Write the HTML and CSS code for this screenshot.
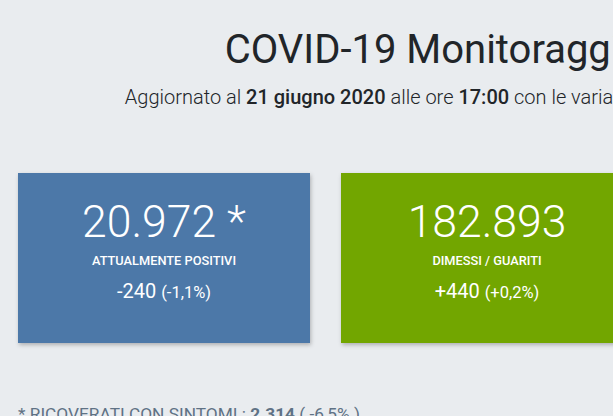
FILE: index.html
```html
<!DOCTYPE html>
<html lang="it">
<head>
<meta charset="utf-8">
<title>COVID-19 Monitoraggio</title>
<link rel="stylesheet" href="styles.css">
</head>
<body>
<div class="page">
  <header class="header">
    <h1 class="title">COVID-19 Monitoraggio Situazione</h1>
    <p class="lead">Aggiornato al <b>21 giugno 2020</b> alle ore <b>17:00</b> con le variazioni rispetto al giorno precedente</p>
  </header>
  <section class="cards">
    <div class="card card-blue">
      <div class="num">20.972 *</div>
      <div class="label">Attualmente positivi</div>
      <div class="delta">-240 <span class="pct">(-1,1%)</span></div>
    </div>
    <div class="card card-green">
      <div class="num">182.893</div>
      <div class="label">Dimessi / Guariti</div>
      <div class="delta">+440 <span class="pct">(+0,2%)</span></div>
    </div>
    <div class="card card-red">
      <div class="num">34.634</div>
      <div class="label">Deceduti</div>
      <div class="delta">+24 <span class="pct">(+0,1%)</span></div>
    </div>
  </section>
  <p class="note">* RICOVERATI CON SINTOMI : <b>2.314</b> ( -6,5% )</p>
</div>
</body>
</html>
```

FILE: styles.css
```css
html, body {
  margin: 0;
  padding: 0;
  overflow: hidden;
}
body {
  background: #e9ecef;
  font-family: Roboto, "Liberation Sans", sans-serif;
  color: #212529;
}
.page {
  width: 1034px;
}
.header {
  text-align: center;
  padding-top: 26px;
}
.title {
  margin: 0;
  padding-left: 30px;
  font-size: 40px;
  font-weight: 400;
  line-height: 1.2;
}
.lead {
  margin: 8px 0 0;
  font-size: 20px;
  font-weight: 300;
  line-height: 1.5;
}
.lead b {
  font-weight: 500;
}
.cards {
  display: grid;
  grid-template-columns: repeat(3, 292px);
  column-gap: 31px;
  padding-left: 18px;
  margin-top: 61px;
}
.card {
  height: 170px;
  box-sizing: border-box;
  padding-top: 23px;
  color: #fff;
  text-align: center;
  box-shadow: 1px 2px 4px rgba(0, 0, 0, 0.25);
}
.card-blue { background: #4c78a8; }
.card-green { background: #72a600; }
.card-red { background: #e45756; }
.num {
  font-size: 44.5px;
  font-weight: 300;
  line-height: 1.2;
}
.label {
  margin-top: 4px;
  font-size: 12.8px;
  font-weight: 500;
  text-transform: uppercase;
}
.delta {
  margin-top: 11px;
  font-size: 20px;
  font-weight: 400;
}
.pct {
  font-size: 16.5px;
}
.note {
  margin: 61px 0 0 18px;
  font-size: 17.3px;
  color: #5f7285;
}
```
